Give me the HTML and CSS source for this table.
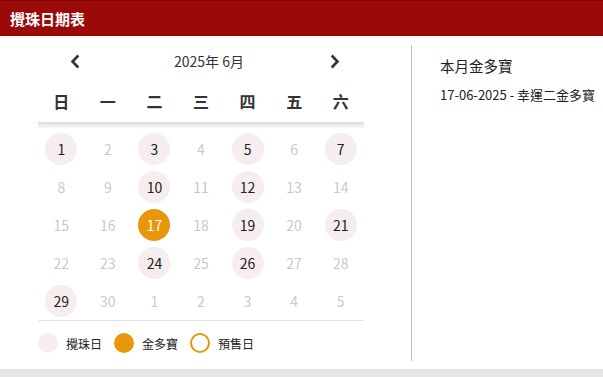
FILE: index.html
```html
<!DOCTYPE html>
<html lang="zh-Hant">
<head>
<meta charset="utf-8">
<link rel="stylesheet" href="styles.css">
</head>
<body>
<div class="page">
  <header class="topbar"><h1 class="title">攪珠日期表</h1></header>
  <main class="main">
    <section class="cal">
      <div class="nav">
        <span class="arrow arrow-l"><svg width="10" height="15" viewBox="0 0 10 15"><path d="M8.3 1.5 L2.5 7.5 L8.3 13.5" fill="none" stroke="#333" stroke-width="2.6"/></svg></span>
        <span class="month">2025年 6月</span>
        <span class="arrow arrow-r"><svg width="10" height="15" viewBox="0 0 10 15"><path d="M1.7 1.5 L7.5 7.5 L1.7 13.5" fill="none" stroke="#333" stroke-width="2.6"/></svg></span>
      </div>
      <div class="weekdays">
        <span>日</span><span>一</span><span>二</span><span>三</span><span>四</span><span>五</span><span>六</span>
      </div>
      <div class="shade"></div>
      <div class="days">
        <span class="d draw">1</span><span class="d">2</span><span class="d draw">3</span><span class="d">4</span><span class="d draw">5</span><span class="d">6</span><span class="d draw">7</span>
        <span class="d">8</span><span class="d">9</span><span class="d draw">10</span><span class="d">11</span><span class="d draw">12</span><span class="d">13</span><span class="d">14</span>
        <span class="d">15</span><span class="d">16</span><span class="d jackpot">17</span><span class="d">18</span><span class="d draw">19</span><span class="d">20</span><span class="d draw">21</span>
        <span class="d">22</span><span class="d">23</span><span class="d draw">24</span><span class="d">25</span><span class="d draw">26</span><span class="d">27</span><span class="d">28</span>
        <span class="d draw">29</span><span class="d">30</span><span class="d">1</span><span class="d">2</span><span class="d">3</span><span class="d">4</span><span class="d">5</span>
      </div>
      <div class="legend">
        <span class="dot dot-draw"></span><span class="lbl">攪珠日</span>
        <span class="dot dot-jack"></span><span class="lbl">金多寶</span>
        <span class="dot dot-pre"></span><span class="lbl">預售日</span>
      </div>
    </section>
    <aside class="side">
      <h2 class="side-title">本月金多寶</h2>
      <p class="side-item">17-06-2025 - 幸運二金多寶</p>
    </aside>
  </main>
</div>
</body>
</html>
```
FILE: styles.css
```css
html, body { margin: 0; padding: 0; }
body {
  background: #e7e5e5;
  font-family: "Noto Sans CJK TC", "Noto Sans", sans-serif;
  color: #222;
  width: 603px;
  height: 377px;
  overflow: hidden;
}
.page {
  background: #fff;
  height: 369px;
}
.topbar {
  height: 36px;
  background: #9b0909;
  border-top: 1px solid #7d0505;
  box-sizing: border-box;
  display: flex;
  align-items: center;
  padding-left: 10px;
}
.title {
  margin: 0;
  color: #fff;
  font-size: 15px;
  font-weight: 700;
  line-height: 1;
}
.main {
  display: flex;
  padding-top: 9px;
}
.cal {
  width: 412px;
  box-sizing: border-box;
  padding-left: 38px;
  padding-right: 47px;
  border-right: 1px solid #bdbdbd;
  height: 316px;
}
.nav {
  height: 32px;
  display: flex;
  align-items: center;
  position: relative;
}
.arrow { display: flex; width: 10px; height: 15px; }
.arrow-l { margin-left: 32px; }
.arrow-r { margin-left: auto; margin-right: 24px; }
.month {
  position: absolute;
  left: 136px;
  font-size: 14px;
  color: #333;
}
.weekdays {
  margin-top: 9px;
  height: 30px;
  display: grid;
  grid-template-columns: repeat(7, 1fr);
  align-items: center;
  justify-items: center;
  font-size: 16px;
  font-weight: 700;
  color: #333;
}
.shade {
  margin-top: 6px;
  height: 6px;
  background: linear-gradient(#dedada, #f9f7f7);
}
.days {
  margin-top: 2px;
  display: grid;
  grid-template-columns: repeat(7, 1fr);
  grid-auto-rows: 38px;
  align-items: center;
  justify-items: center;
  border-bottom: 1px solid #e6e2e2;
}
.d {
  width: 32px;
  height: 32px;
  border-radius: 50%;
  display: flex;
  align-items: center;
  justify-content: center;
  font-size: 14px;
  color: #c9c9c9;
}
.d.draw { background: #f6eeee; color: #222; }
.d.jackpot { background: #e8970a; color: #fff; }
.legend {
  margin-top: 12px;
  display: flex;
  align-items: center;
  height: 20px;
}
.dot {
  width: 20px;
  height: 20px;
  border-radius: 50%;
  box-sizing: border-box;
  margin-right: 8px;
}
.dot-draw { background: #f6eeee; }
.dot-jack { background: #e8970a; }
.dot-pre { border: 2px solid #e8970a; }
.lbl { font-size: 12px; margin-right: 12px; color: #222; }
.side {
  padding-left: 28px;
}
.side-title {
  margin: 12px 0 0;
  font-size: 14.5px;
  font-weight: 400;
  line-height: 18px;
}
.side-item {
  margin: 11px 0 0;
  font-size: 13px;
  line-height: 17px;
}
```
